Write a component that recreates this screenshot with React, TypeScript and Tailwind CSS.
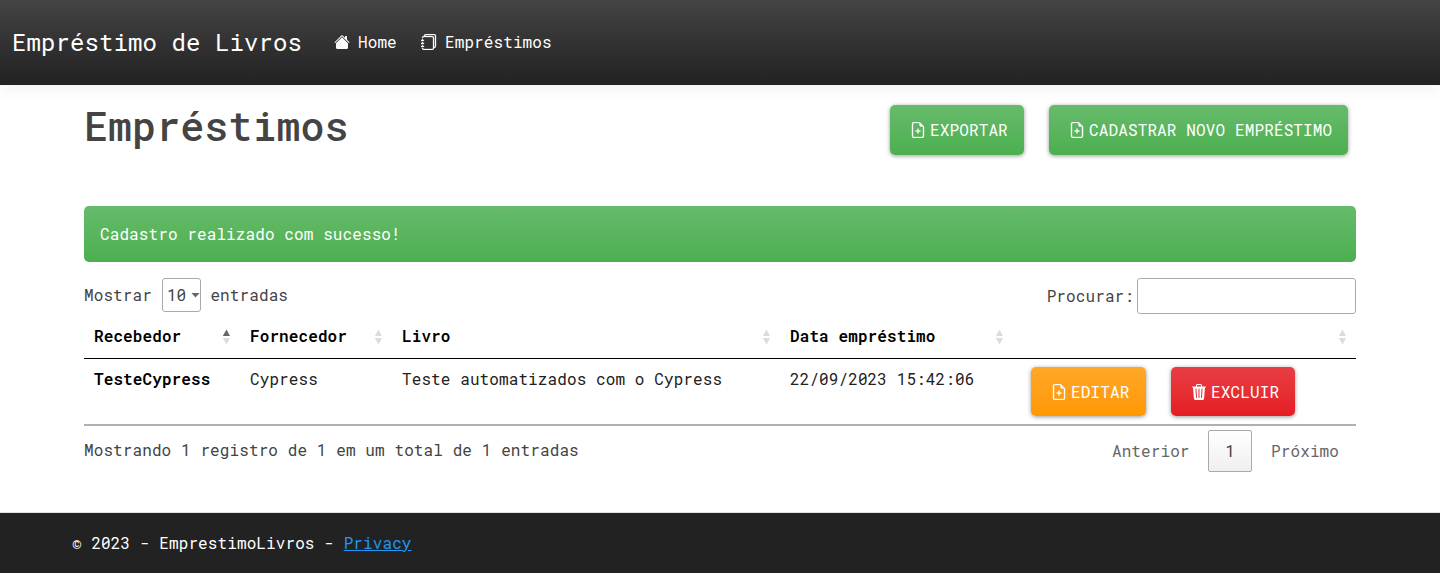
import type { ReactNode } from "react";
import { BsFileEarmarkPlus, BsHouseFill, BsJournals, BsTrash3Fill } from "react-icons/bs";

function SortIcon({ active = false }: { active?: boolean }) {
  return (
    <svg width="8" height="16" viewBox="0 0 8 16" className="mt-px shrink-0">
      <path d="M0.8 7 L4.5 0.5 L8 7 Z" fill={active ? "#666" : "#dcdcdc"} />
      <path d="M0.8 9 L4.5 15.5 L8 9 Z" fill="#dcdcdc" />
    </svg>
  );
}

function HeadCell({ children, active }: { children?: ReactNode; active?: boolean }) {
  return (
    <div className="flex items-center justify-between pr-2.5 pl-2.5 font-semibold text-black">
      <span>{children}</span>
      <SortIcon active={active} />
    </div>
  );
}

function ActionButton({ icon, children, className }: { icon: ReactNode; children: string; className: string }) {
  return (
    <button
      className={`flex items-center rounded-[5px] pl-5 text-[16px] tracking-[0.13px] text-white shadow-[0_1px_4px_rgba(0,0,0,0.4)] ${className}`}
    >
      {icon}
      <span className="ml-1 whitespace-nowrap">{children}</span>
    </button>
  );
}

function FileIcon() {
  return <BsFileEarmarkPlus size={16} stroke="currentColor" strokeWidth={0.35} />;
}

export default function App() {
  return (
    <div className="flex h-[573px] flex-col bg-white font-['Roboto_Mono','DejaVu_Sans_Mono',monospace] text-[16px] leading-6 font-normal tracking-[0.1px] text-[#444]">
      <header className="flex h-[85px] shrink-0 items-center bg-linear-to-b from-[#444] to-[#222] pl-3 text-white shadow-[0_0_20px_rgba(0,0,0,0.08)]">
        <span className="-mt-0.5 w-[322px] text-[24px]">Empréstimo de Livros</span>
        <nav className="-mt-px flex items-center">
          <a className="flex w-[87px] items-center gap-2">
            <BsHouseFill size={16} />
            Home
          </a>
          <a className="flex items-center gap-2">
            <BsJournals size={16} stroke="currentColor" strokeWidth={0.3} />
            Empréstimos
          </a>
        </nav>
      </header>

      <main className="mx-[84px] flex grow flex-col">
        <div className="flex h-[121px] items-start justify-between pt-5 pr-2">
          <h1 className="-mt-0.5 text-[40px] leading-[45px] font-medium tracking-[0.05px]">Empréstimos</h1>
          <div className="flex gap-[25px]">
            <ActionButton className="h-[50px] w-[134px] bg-linear-to-b from-[#66bb6a] to-[#4caf50]" icon={<FileIcon />}>
              EXPORTAR
            </ActionButton>
            <ActionButton className="h-[50px] w-[299px] bg-linear-to-b from-[#66bb6a] to-[#4caf50]" icon={<FileIcon />}>
              CADASTRAR NOVO EMPRÉSTIMO
            </ActionButton>
          </div>
        </div>

        <div className="flex h-14 items-center rounded-[5px] bg-linear-to-b from-[#66bb6a] to-[#4caf50] px-4 text-white">
          Cadastro realizado com sucesso!
        </div>

        <div className="mt-4 flex h-9 items-start justify-between">
          <label className="flex h-[34px] items-center">
            Mostrar
            <span className="mr-[9.5px] ml-2.5 flex h-[34px] w-[39px] items-center justify-between rounded-[3px] border border-[#aaa] pl-1">
              10
              <svg width="9" height="5" viewBox="0 0 9 5">
                <path d="M0.5 0 H8.5 L4.5 4.5 Z" fill="#666" />
              </svg>
            </span>
            entradas
          </label>
          <label className="flex h-9 items-center gap-[3px]">
            Procurar:
            <input className="h-9 w-[219px] rounded-[3px] border border-[#aaa] bg-transparent" />
          </label>
        </div>

        <div className="grid h-[45px] grid-cols-[156px_152px_388px_233px_1fr] border-b border-black">
          <HeadCell active>Recebedor</HeadCell>
          <HeadCell>Fornecedor</HeadCell>
          <HeadCell>Livro</HeadCell>
          <HeadCell>Data empréstimo</HeadCell>
          <HeadCell />
        </div>
        <div className="grid h-[67px] grid-cols-[156px_152px_388px_233px_1fr] border-b-2 border-[#b0b0b0] pt-2 text-[#212121]">
          <span className="pl-2.5 font-semibold text-black">TesteCypress</span>
          <span className="pl-2.5">Cypress</span>
          <span className="pl-2.5">Teste automatizados com o Cypress</span>
          <span className="pl-2.5">22/09/2023 15:42:06</span>
          <div className="flex gap-[25px] pl-[18px]">
            <ActionButton className="h-[49px] w-[115px] bg-linear-to-b from-[#ffa726] to-[#ff9800]" icon={<FileIcon />}>
              EDITAR
            </ActionButton>
            <ActionButton className="h-[49px] w-[124px] bg-linear-to-b from-[#e83d43] to-[#e51c23]" icon={<BsTrash3Fill size={16} />}>
              EXCLUIR
            </ActionButton>
          </div>
        </div>

        <div className="flex justify-between pt-1">
          <span className="pt-2">Mostrando 1 registro de 1 em um total de 1 entradas</span>
          <div className="flex h-[42px] items-center pr-[17px] text-[#666]">
            <span>Anterior</span>
            <span className="mr-[19px] ml-[18.5px] flex h-[42px] w-11 items-center justify-center rounded-[2px] border border-[#aaa] bg-linear-to-b from-white to-[#efefef] text-[#444]">
              1
            </span>
            <span>Próximo</span>
          </div>
        </div>
      </main>

      <footer className="h-[61px] shrink-0 border-t border-[#dee2e6] bg-[#222] pt-[18px] pl-[72px] text-white">
        © 2023 - EmprestimoLivros - <a className="text-[#2196f3] underline">Privacy</a>
      </footer>
    </div>
  );
}
